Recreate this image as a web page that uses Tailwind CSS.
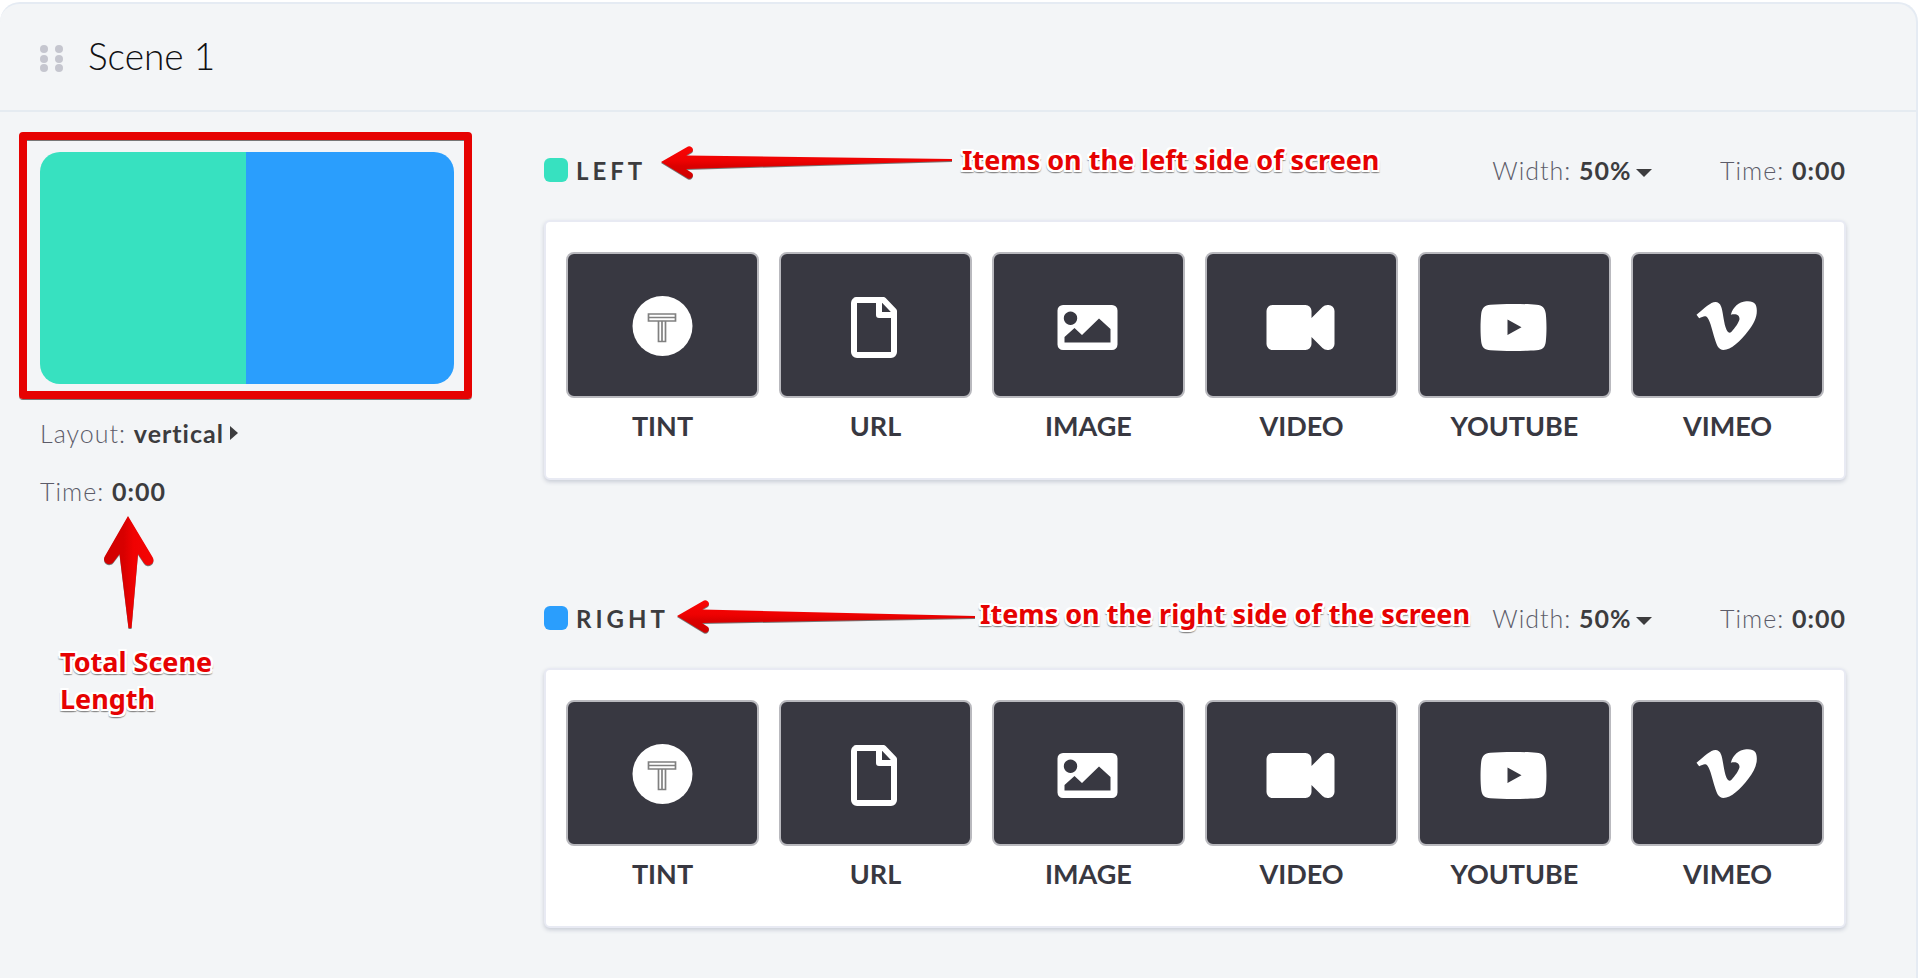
<!DOCTYPE html>
<html lang="en">
<head>
<meta charset="utf-8">
<title>Scene 1</title>
<script src="https://cdn.jsdelivr.net/npm/@tailwindcss/browser@4"></script>
<style>
  .note { text-shadow: 2px 0 #fff, -2px 0 #fff, 0 2px #fff, 0 -2px #fff, 2px 2px #fff, -2px 2px #fff, 2px -2px #fff, -2px -2px #fff, 0 3px 1px #888, 2px 3px 1px #999, -2px 3px 1px #999; }
</style>
</head>
<body class="min-h-screen bg-white pt-[2px] font-['Lato',sans-serif] text-[#3c3c3e]">

<!-- Icon set -->
<svg class="absolute size-0" aria-hidden="true">
  <defs>
    <linearGradient id="redV" x1="0" y1="0" x2="0" y2="1"><stop offset="0" stop-color="#f90505"/><stop offset=".45" stop-color="#ee0202"/><stop offset=".6" stop-color="#dc0000"/><stop offset="1" stop-color="#cf0000"/></linearGradient>
    <linearGradient id="redH" x1="0" y1="0" x2="1" y2="0"><stop offset="0" stop-color="#d00000"/><stop offset=".4" stop-color="#d80000"/><stop offset=".6" stop-color="#f00202"/><stop offset="1" stop-color="#f50505"/></linearGradient>
  </defs>
  <symbol id="tint" viewBox="0 0 80 80">
    <circle cx="39.500" cy="41" r="30" fill="#fff"/>
    <path d="M25.500 29h27v7h-27zM25.500 32.500h27M35.500 36h7v20.500h-7zM39 36v20.500" fill="none" stroke="#808080" stroke-width="1.700"/>
  </symbol>
  <symbol id="url" viewBox="0 0 80 80">
    <path d="M20 15h27.500l10.500 11v41a3 3 0 0 1-3 3H21a3 3 0 0 1-3-3V18a3 3 0 0 1 3-3z" fill="none" stroke="#fff" stroke-width="6" stroke-linejoin="round"/>
    <path d="M43 15v15h15" fill="none" stroke="#fff" stroke-width="6" stroke-linejoin="round"/>
  </symbol>
  <symbol id="image" viewBox="0 0 80 80">
    <path fill="#fff" fill-rule="evenodd" d="M14 20h49a5.500 5.500 0 0 1 5.500 5.500v34a5.500 5.500 0 0 1-5.500 5.500H14a5.500 5.500 0 0 1-5.500-5.500v-34A5.500 5.500 0 0 1 14 20zM21.500 26.500a6.700 6.700 0 1 0 .01 0zM15.500 57.500h46V44L50 33.500 33 50l-7.500-7-10 9z"/>
  </symbol>
  <symbol id="video" viewBox="0 0 80 80">
    <path fill="#fff" d="M10.500 20h33a6 6 0 0 1 6 6v7l11-11q2-2 5-2h1a6 6 0 0 1 6 6v33a6 6 0 0 1-6 6h-1q-3 0-5-2l-11-11v7a6 6 0 0 1-6 6h-33a6 6 0 0 1-6-6V26a6 6 0 0 1 6-6z"/>
  </symbol>
  <symbol id="youtube" viewBox="0 0 80 80">
    <path fill="#fff" fill-rule="evenodd" d="M38.500 19c9 0 17 .2 23 .7 6 .6 8.500 3 9.300 9 .9 8 .9 20 0 28-.8 6-3.300 8-9.300 8.600-12 .9-34 .9-46 0-6-.6-8.500-2.600-9.300-8.600-.9-8-.9-20 0-28 .8-6 3.300-8.400 9.300-9 6-.5 14-.7 23-.7zM32.500 34.500V50L46.500 42.300z"/>
  </symbol>
  <symbol id="vimeo" viewBox="0 0 80 80">
    <path fill="#fff" transform="translate(-287.500 -45) scale(.33333)" d="M888 224C905 210 922 195 933 189C946 183 957 186 962 200C967 213 969 240 975 261C980 277 986 282 993 275C1003 265 1015 248 1017 238C1018 226 1008 220 991 224C998 201 1014 186 1037 184C1062 182 1069 193 1069 212C1069 234 1059 252 1043 273C1020 303 991 330 969 330C954 330 948 314 943 297C936 275 930 245 921 233C915 225 907 229 896 235Z"/>
  </symbol>
</svg>

<main class="min-h-[976px] rounded-t-[20px] border-t-2 border-r-2 border-[#e5ebf3] bg-[#f3f5f7]">
  <header class="flex h-[108px] items-center border-b-2 border-[#e5ebf1] pl-10">
    <button type="button" aria-label="Reorder scene" class="mt-1 cursor-move">
      <svg class="block" width="24" height="28" fill="#c5c6cf"><circle cx="4" cy="4" r="4"/><circle cx="19" cy="4" r="4"/><circle cx="4" cy="14" r="4"/><circle cx="19" cy="14" r="4"/><circle cx="4" cy="23" r="4"/><circle cx="19" cy="23" r="4"/></svg>
    </button>
    <h1 class="mb-[2px] ml-6 text-[37px] leading-[44px] font-light text-[#101013]">Scene 1</h1>
  </header>

  <div class="flex">
    <aside class="w-[544px] shrink-0 pt-10 pl-10 text-[25px] leading-8 text-[#5c5c69]">
      <div class="relative w-[414px]">
        <div class="flex h-[232px] overflow-hidden rounded-[20px]">
          <div class="w-[206px] bg-[#37e1c0]"></div>
          <div class="flex-1 bg-[#2a9efd]"></div>
        </div>
        <div class="absolute -top-5 -right-[18px] -bottom-[15px] -left-[21px] rounded-[4px] border-8 border-[#e60202] shadow-[0_1px_0_#777,inset_0_1px_0_#777]"></div>
      </div>
      <p class="mt-[33px] flex items-center font-light tracking-[1px]">Layout:&nbsp;<button type="button" class="flex items-center font-bold text-[#3c3c3e]">vertical<svg class="ml-1.5" width="8" height="14" fill="currentColor"><path d="M0 0L8 7L0 14Z"/></svg></button></p>
      <p class="mt-[26px] font-light tracking-[1px]">Time: <strong class="font-bold text-[#3c3c3e]">0:00</strong></p>
      <div class="mt-2 ml-[62px]">
        <svg class="block drop-shadow-[0_1px_0_#777]" width="54" height="116"><path fill="url(#redH)" d="M26 1L50.500 42A5 5 0 0 1 42 48L36 39L29.500 113H26.500L17.500 39L11.500 47A5 5 0 0 1 3 41Z"/></svg>
      </div>
      <p class="note mt-3 ml-5 w-[180px] font-['Noto_Sans',sans-serif] text-[27px] leading-[37px] font-bold text-[#e60202]">Total Scene Length</p>
    </aside>

    <div class="flex min-w-0 flex-1 flex-col gap-[114px] pt-[34px] pr-[70px]">
      <section>
        <div class="relative mb-[26px] flex h-12 items-center text-[25px] text-[#5c5c69]">
          <span class="size-6 rounded-[6px] bg-[#37e1c0]"></span>
          <h2 class="mt-[2px] ml-2 text-[24px] font-bold tracking-[4px] text-[#3c3c3e]">LEFT</h2>
          <div class="absolute -top-[2px] left-[116px] flex items-center">
            <svg class="drop-shadow-[0_1px_0_#777]" width="294" height="36"><path fill="url(#redV)" d="M1 18L28 2.500A3.500 3.500 0 0 1 32 8L26 11.500L292 15V17L26 25L32 29A3.500 3.500 0 0 1 28 34.500Z"/></svg>
            <span class="note mb-1 ml-2 font-['Noto_Sans',sans-serif] text-[27px] leading-8 font-bold whitespace-nowrap text-[#e60202]">Items on the left side of screen</span>
          </div>
          <label class="mt-[2px] ml-auto flex items-center font-light tracking-[1px]">Width:&nbsp;<select class="appearance-none bg-transparent font-bold text-[#3c3c3e]"><option>50%</option></select><svg class="mt-1 ml-1" width="16" height="8" fill="#3c3c3e"><path d="M0 0H16L8 8Z"/></svg></label>
          <p class="mt-[2px] ml-[68px] font-light tracking-[1px]">Time: <strong class="font-bold text-[#3c3c3e]">0:00</strong></p>
        </div>
        <div class="grid grid-cols-6 gap-5 rounded-[6px] border-2 border-[#e8eaf3] bg-white px-5 pt-[30px] pb-9 text-[27px] leading-8 font-bold text-[#383841] shadow-[0_2px_4px_#c8ccd6]">
          <button type="button"><span class="flex h-[146px] items-center justify-center rounded-[8px] border-2 border-[#b9b9be] bg-[#383841]"><svg class="size-20"><use href="#tint"/></svg></span><span class="mt-3 block">TINT</span></button>
          <button type="button"><span class="flex h-[146px] items-center justify-center rounded-[8px] border-2 border-[#b9b9be] bg-[#383841]"><svg class="size-20"><use href="#url"/></svg></span><span class="mt-3 block">URL</span></button>
          <button type="button"><span class="flex h-[146px] items-center justify-center rounded-[8px] border-2 border-[#b9b9be] bg-[#383841]"><svg class="size-20"><use href="#image"/></svg></span><span class="mt-3 block">IMAGE</span></button>
          <button type="button"><span class="flex h-[146px] items-center justify-center rounded-[8px] border-2 border-[#b9b9be] bg-[#383841]"><svg class="size-20"><use href="#video"/></svg></span><span class="mt-3 block">VIDEO</span></button>
          <button type="button"><span class="flex h-[146px] items-center justify-center rounded-[8px] border-2 border-[#b9b9be] bg-[#383841]"><svg class="size-20"><use href="#youtube"/></svg></span><span class="mt-3 block">YOUTUBE</span></button>
          <button type="button"><span class="flex h-[146px] items-center justify-center rounded-[8px] border-2 border-[#b9b9be] bg-[#383841]"><svg class="size-20"><use href="#vimeo"/></svg></span><span class="mt-3 block">VIMEO</span></button>
        </div>
      </section>

      <section>
        <div class="relative mb-[26px] flex h-12 items-center text-[25px] text-[#5c5c69]">
          <span class="size-6 rounded-[6px] bg-[#2a9efd]"></span>
          <h2 class="mt-[2px] ml-2 text-[24px] font-bold tracking-[4px] text-[#3c3c3e]">RIGHT</h2>
          <div class="absolute top-1 left-[132px] flex items-center">
            <svg class="drop-shadow-[0_1px_0_#777]" width="300" height="36"><path fill="url(#redV)" d="M1 18L28 2.500A3.500 3.500 0 0 1 32 8L26 11.500L299 18V20L26 25L32 29A3.500 3.500 0 0 1 28 34.500Z"/></svg>
            <span class="note mb-1 ml-1 font-['Noto_Sans',sans-serif] text-[27px] leading-8 font-bold whitespace-nowrap text-[#e60202]">Items on the right side of the screen</span>
          </div>
          <label class="mt-[2px] ml-auto flex items-center font-light tracking-[1px]">Width:&nbsp;<select class="appearance-none bg-transparent font-bold text-[#3c3c3e]"><option>50%</option></select><svg class="mt-1 ml-1" width="16" height="8" fill="#3c3c3e"><path d="M0 0H16L8 8Z"/></svg></label>
          <p class="mt-[2px] ml-[68px] font-light tracking-[1px]">Time: <strong class="font-bold text-[#3c3c3e]">0:00</strong></p>
        </div>
        <div class="grid grid-cols-6 gap-5 rounded-[6px] border-2 border-[#e8eaf3] bg-white px-5 pt-[30px] pb-9 text-[27px] leading-8 font-bold text-[#383841] shadow-[0_2px_4px_#c8ccd6]">
          <button type="button"><span class="flex h-[146px] items-center justify-center rounded-[8px] border-2 border-[#b9b9be] bg-[#383841]"><svg class="size-20"><use href="#tint"/></svg></span><span class="mt-3 block">TINT</span></button>
          <button type="button"><span class="flex h-[146px] items-center justify-center rounded-[8px] border-2 border-[#b9b9be] bg-[#383841]"><svg class="size-20"><use href="#url"/></svg></span><span class="mt-3 block">URL</span></button>
          <button type="button"><span class="flex h-[146px] items-center justify-center rounded-[8px] border-2 border-[#b9b9be] bg-[#383841]"><svg class="size-20"><use href="#image"/></svg></span><span class="mt-3 block">IMAGE</span></button>
          <button type="button"><span class="flex h-[146px] items-center justify-center rounded-[8px] border-2 border-[#b9b9be] bg-[#383841]"><svg class="size-20"><use href="#video"/></svg></span><span class="mt-3 block">VIDEO</span></button>
          <button type="button"><span class="flex h-[146px] items-center justify-center rounded-[8px] border-2 border-[#b9b9be] bg-[#383841]"><svg class="size-20"><use href="#youtube"/></svg></span><span class="mt-3 block">YOUTUBE</span></button>
          <button type="button"><span class="flex h-[146px] items-center justify-center rounded-[8px] border-2 border-[#b9b9be] bg-[#383841]"><svg class="size-20"><use href="#vimeo"/></svg></span><span class="mt-3 block">VIMEO</span></button>
        </div>
      </section>
    </div>
  </div>
</main>
</body>
</html>
